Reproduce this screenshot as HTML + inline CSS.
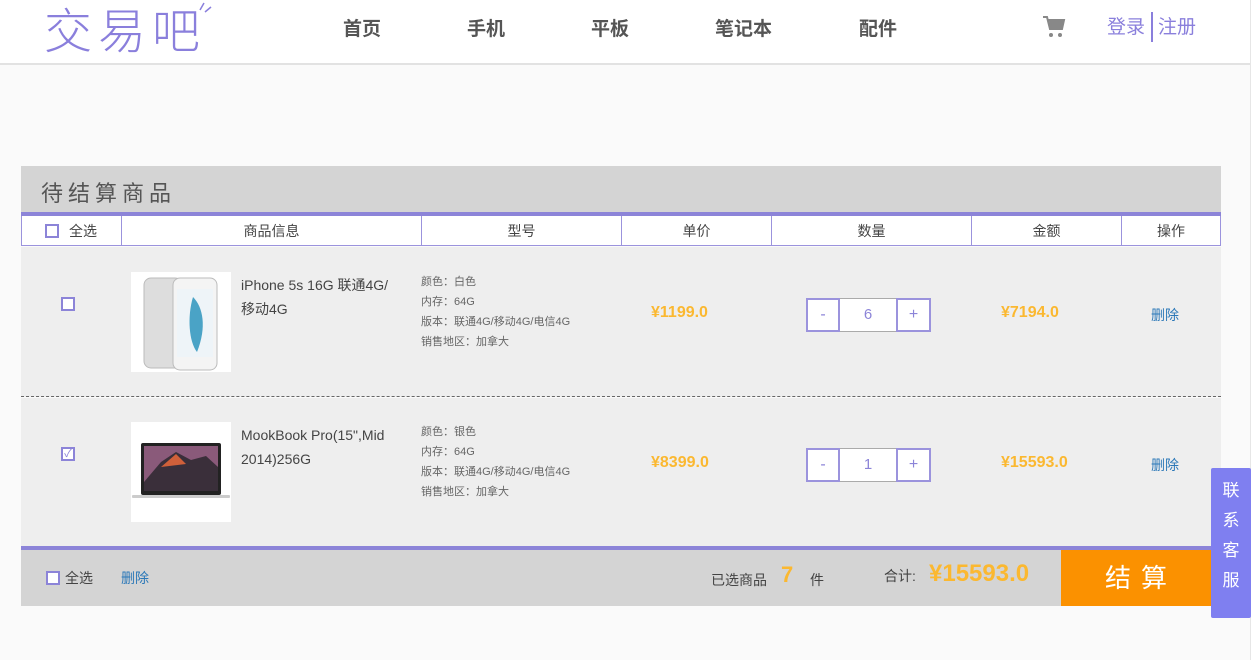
<!DOCTYPE html>
<html><head><meta charset="utf-8"><style>
*{margin:0;padding:0;box-sizing:border-box}
body{width:1256px;height:660px;background:#fafafa;font-family:"Liberation Sans","Noto Sans CJK SC",sans-serif;position:relative;overflow:hidden;color:#333}
.a{position:absolute}
.hdr{left:0;top:0;width:1250px;height:65px;background:#fff;border-bottom:2px solid #e2e2e2}
.nav{top:14px;font-size:19px;color:#555;font-weight:bold}
.cell{position:absolute;top:0;height:30px;line-height:30px;text-align:center;font-size:14px;color:#444;border-right:1px solid #9b93dd}
.cb{position:absolute;width:14px;height:14px;border:2px solid #8c84d8;background:#fff}
.spec{font-size:11px;color:#666;line-height:20px}
.price{font-size:16px;font-weight:bold;color:#fbb830}
.del{font-size:14px;color:#2b78b8}
.qty{position:absolute;height:34px;border:2px solid #9b93dd;background:#fff;text-align:center;line-height:30px;color:#8c84d8;font-size:16px}
</style></head><body>
<div class="a hdr"></div>
<div class="a" style="left:44px;top:-8px;font-size:48px;color:#8a7fdc;letter-spacing:6px;font-weight:300;font-family:'Noto Sans CJK SC',sans-serif">交易吧</div>
<svg class="a" style="left:196px;top:2px" width="18" height="14"><path d="M4 8 L8 1 M9 10 L15 5" stroke="#8a7fdc" stroke-width="1.5" fill="none"/></svg>
<div class="a nav" style="left:343px">首页</div>
<div class="a nav" style="left:467px">手机</div>
<div class="a nav" style="left:591px">平板</div>
<div class="a nav" style="left:715px">笔记本</div>
<div class="a nav" style="left:859px">配件</div>
<svg class="a" style="left:1042px;top:15px" width="24" height="24" viewBox="0 0 24 24"><path d="M1 2h4l3 12h12l2-9H6" fill="none" stroke="#888" stroke-width="2"/><path d="M7 6h15l-2 8H8z" fill="#888"/><circle cx="9" cy="20" r="2" fill="#888"/><circle cx="18" cy="20" r="2" fill="#888"/></svg>
<div class="a" style="left:1107px;top:12px;font-size:19px;color:#8a7fdc">登录</div>
<div class="a" style="left:1151px;top:12px;width:2px;height:30px;background:#8a7fdc"></div>
<div class="a" style="left:1158px;top:12px;font-size:19px;color:#8a7fdc">注册</div>

<div class="a" style="left:21px;top:166px;width:1200px;height:46px;background:#d4d4d4"></div>
<div class="a" style="left:41px;top:176px;font-size:22px;color:#555;letter-spacing:5px">待结算商品</div>
<div class="a" style="left:21px;top:212px;width:1200px;height:4px;background:#8c84d8"></div>
<div class="a" style="left:21px;top:216px;width:1200px;height:30px;background:#fff;border-left:1px solid #9b93dd;border-bottom:1px solid #9b93dd">
<div class="cell" style="left:0;width:100px;text-align:left;padding-left:47px">全选</div>
<div class="cb" style="left:23px;top:8px"></div>
<div class="cell" style="left:100px;width:300px">商品信息</div>
<div class="cell" style="left:400px;width:200px">型号</div>
<div class="cell" style="left:600px;width:150px">单价</div>
<div class="cell" style="left:750px;width:200px">数量</div>
<div class="cell" style="left:950px;width:150px">金额</div>
<div class="cell" style="left:1100px;width:99px">操作</div>
</div>

<!-- row 1 -->
<div class="a" style="left:21px;top:247px;width:1200px;height:150px;background:#eeeeee;border-bottom:1px dashed #666"></div>
<div class="cb" style="left:61px;top:297px"></div>
<div class="a" style="left:131px;top:272px;width:100px;height:100px;background:#fff">
<svg width="100" height="100"><rect x="13" y="6" width="38" height="90" rx="7" fill="#ddd" stroke="#bbb"/><rect x="42" y="6" width="44" height="92" rx="7" fill="#f4f4f4" stroke="#bbb"/><rect x="46" y="17" width="36" height="68" fill="#eef4f8"/><path d="M62 25 C72 35 76 55 66 80 C58 70 56 45 62 25z" fill="#4aa3c6"/></svg></div>
<div class="a" style="left:241px;top:273px;font-size:14px;line-height:24px;color:#444;width:162px">iPhone 5s 16G 联通4G/ 移动4G</div>
<div class="a spec" style="left:421px;top:272px">颜色：白色<br>内存：64G<br>版本：联通4G/移动4G/电信4G<br>销售地区：加拿大</div>
<div class="a price" style="left:651px;top:304px">¥1199.0</div>
<div class="qty" style="left:806px;top:298px;width:34px">-</div>
<div class="a" style="left:840px;top:298px;width:56px;height:34px;background:#fff;border-top:1px solid #aaa;border-bottom:1px solid #aaa;text-align:center;line-height:32px;color:#8c84d8;font-size:15px">6</div>
<div class="qty" style="left:896px;top:298px;width:35px">+</div>
<div class="a price" style="left:1001px;top:304px">¥7194.0</div>
<div class="a del" style="left:1151px;top:305px">删除</div>

<!-- row 2 -->
<div class="a" style="left:21px;top:398px;width:1200px;height:148px;background:#eeeeee"></div>
<div class="cb" style="left:61px;top:447px;font-size:11px;line-height:10px;color:#8c84d8;text-align:center">✓</div>
<div class="a" style="left:131px;top:422px;width:100px;height:100px;background:#fff">
<svg width="100" height="100"><rect x="10" y="21" width="80" height="52" rx="2" fill="#222"/><rect x="13" y="24" width="74" height="45" fill="#8a5a7a"/><path d="M13 60 L30 40 L45 30 L60 38 L75 34 L87 45 V69 H13z" fill="#3a2f3a"/><path d="M30 45 L45 32 L55 42z" fill="#d0603a"/><rect x="1" y="73" width="98" height="3" rx="1" fill="#ccc"/></svg></div>
<div class="a" style="left:241px;top:423px;font-size:14px;line-height:24px;color:#444;width:170px">MookBook Pro(15",Mid 2014)256G</div>
<div class="a spec" style="left:421px;top:422px">颜色：银色<br>内存：64G<br>版本：联通4G/移动4G/电信4G<br>销售地区：加拿大</div>
<div class="a price" style="left:651px;top:454px">¥8399.0</div>
<div class="qty" style="left:806px;top:448px;width:34px">-</div>
<div class="a" style="left:840px;top:448px;width:56px;height:34px;background:#fff;border-top:1px solid #aaa;border-bottom:1px solid #aaa;text-align:center;line-height:32px;color:#8c84d8;font-size:15px">1</div>
<div class="qty" style="left:896px;top:448px;width:35px">+</div>
<div class="a price" style="left:1001px;top:454px">¥15593.0</div>
<div class="a del" style="left:1151px;top:455px">删除</div>

<!-- footer -->
<div class="a" style="left:21px;top:546px;width:1200px;height:4px;background:#8c84d8"></div>
<div class="a" style="left:21px;top:550px;width:1200px;height:56px;background:#d4d4d4"></div>
<div class="cb" style="left:46px;top:571px"></div>
<div class="a" style="left:65px;top:568px;font-size:14px;color:#444">全选</div>
<div class="a del" style="left:121px;top:568px">删除</div>
<div class="a" style="left:711px;top:570px;font-size:14px;color:#444">已选商品</div>
<div class="a" style="left:781px;top:562px;font-size:22px;color:#fbb830;font-weight:bold">7</div>
<div class="a" style="left:810px;top:570px;font-size:14px;color:#444">件</div>
<div class="a" style="left:884px;top:566px;font-size:14px;color:#444">合计:</div>
<div class="a" style="left:929px;top:560px;font-size:24px;color:#fbb830;font-weight:bold">¥15593.0</div>
<div class="a" style="left:1061px;top:550px;width:160px;height:56px;background:#fb9100;color:#fff;font-size:26px;text-align:center;line-height:56px;letter-spacing:10px">结算</div>

<div class="a" style="left:1250px;top:0;width:6px;height:660px;background:#fff;border-left:1px solid #e6e6e6"></div>
<div class="a" style="left:1211px;top:468px;width:40px;height:150px;background:#7f7ff0;border-radius:2px;color:#fff;font-size:17px;line-height:30px;text-align:center;padding-top:8px">联<br>系<br>客<br>服</div>
</body></html>
